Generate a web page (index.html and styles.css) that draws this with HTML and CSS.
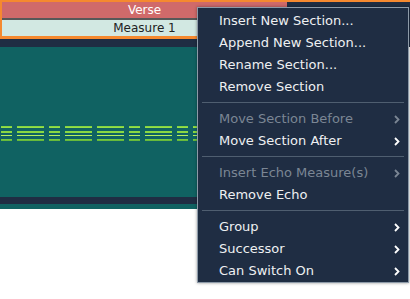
FILE: index.html
```html
<!DOCTYPE html>
<html lang="en">
<head>
  <meta charset="UTF-8">
  <title>Arrangement</title>
  <link rel="stylesheet" href="styles.css">
</head>
<body>
  <div class="header-row">
    <div class="section-box">
      <div class="section-name">Verse</div>
      <div class="measure-name">Measure 1</div>
    </div>
  </div>

  <div class="lane">
    <div class="notes">
      <div class="seg short"></div>
      <div class="seg long"></div>
      <div class="seg short"></div>
      <div class="seg long"></div>
      <div class="seg long"></div>
      <div class="seg short"></div>
      <div class="seg long"></div>
      <div class="seg short"></div>
      <div class="seg long"></div>
    </div>
  </div>
  <div class="lane-footer"></div>
  <div class="lane-tail"></div>

  <!-- context menu for the section -->
  <ul class="context-menu">
    <li class="item">Insert New Section...</li>
    <li class="item">Append New Section...</li>
    <li class="item">Rename Section...</li>
    <li class="item">Remove Section</li>
    <li class="sep"></li>
    <li class="item disabled">Move Section Before <span class="arrow"><svg width="6" height="9" viewBox="0 0 6 9"><polyline points="1,1 4.5,4.5 1,8" /></svg></span></li>
    <li class="item">Move Section After <span class="arrow"><svg width="6" height="9" viewBox="0 0 6 9"><polyline points="1,1 4.5,4.5 1,8" /></svg></span></li>
    <li class="sep"></li>
    <li class="item disabled">Insert Echo Measure(s) <span class="arrow"><svg width="6" height="9" viewBox="0 0 6 9"><polyline points="1,1 4.5,4.5 1,8" /></svg></span></li>
    <li class="item">Remove Echo</li>
    <li class="sep"></li>
    <li class="item">Group <span class="arrow"><svg width="6" height="9" viewBox="0 0 6 9"><polyline points="1,1 4.5,4.5 1,8" /></svg></span></li>
    <li class="item">Successor <span class="arrow"><svg width="6" height="9" viewBox="0 0 6 9"><polyline points="1,1 4.5,4.5 1,8" /></svg></span></li>
    <li class="item">Can Switch On <span class="arrow"><svg width="6" height="9" viewBox="0 0 6 9"><polyline points="1,1 4.5,4.5 1,8" /></svg></span></li>
  </ul>
</body>
</html>
```

FILE: styles.css
```css
body {
  margin: 0;
  background-color: #fff;
  font-family: "DejaVu Sans", Verdana, sans-serif;
}

.header-row {
  background-color: #1f2d43;
  border-top: 2px solid #f5892f;
  height: 45px;
}

.section-box {
  width: 285px;
  border-left: 2px solid #f5892f;
  border-bottom: 3px solid #f5892f;
}

.section-name {
  height: 16px;
  line-height: 16px;
  background-color: #d06a6a;
  color: #fff;
  font-size: 12px;
  text-align: center;
  border-bottom: 2px solid #585858;
}

.measure-name {
  height: 16px;
  line-height: 16px;
  background-color: #d2e8e2;
  color: #222;
  font-size: 12px;
  text-align: center;
}

.lane {
  width: 197px;
  height: 150px;
  background-color: #106262;
  padding-top: 79px;
  box-sizing: border-box;
  overflow: hidden;
}

.notes {
  display: flex;
  gap: 5px;
  padding-left: 1px;
}

.seg {
  flex: none;
  height: 15px;
  background: linear-gradient(to bottom,
    #7ccf3e 0, #9ee64a 2px,
    transparent 2px, transparent 5px,
    #8ad842 5px, #8ad842 7px,
    transparent 7px, transparent 9px,
    #b6f05e 9px, #b6f05e 10px,
    transparent 10px, transparent 13px,
    #7ccf3e 13px, #5fb23a 15px);
}

.seg.short {
  width: 11px;
}

.seg.long {
  width: 27px;
}

.lane-footer {
  width: 197px;
  height: 7px;
  background-color: #1f2d43;
}

.lane-tail {
  width: 197px;
  height: 5px;
  background-color: #106262;
}

.context-menu {
  position: absolute;
  left: 197px;
  top: 7px;
  width: 212px;
  box-sizing: border-box;
  margin: 0;
  padding: 2px 0 0;
  list-style: none;
  background-color: #1f2d43;
  border: 1px solid #8d9aa8;
  box-shadow: 0 0 3px rgba(0,0,0,0.4);
}

.context-menu .item {
  position: relative;
  height: 22px;
  line-height: 22px;
  padding-left: 21px;
  color: #eef0f2;
  font-size: 13px;
}

.context-menu .item.disabled {
  color: #7b8694;
}

.arrow {
  position: absolute;
  right: 8px;
  top: 7px;
  line-height: 0;
}

.arrow polyline {
  fill: none;
  stroke: #fff;
  stroke-width: 1.8;
}

.disabled .arrow polyline {
  stroke: #7b8694;
}

.context-menu .sep {
  height: 1px;
  margin: 4px 4px 5px 4px;
  background-color: #4f5e70;
}
```
